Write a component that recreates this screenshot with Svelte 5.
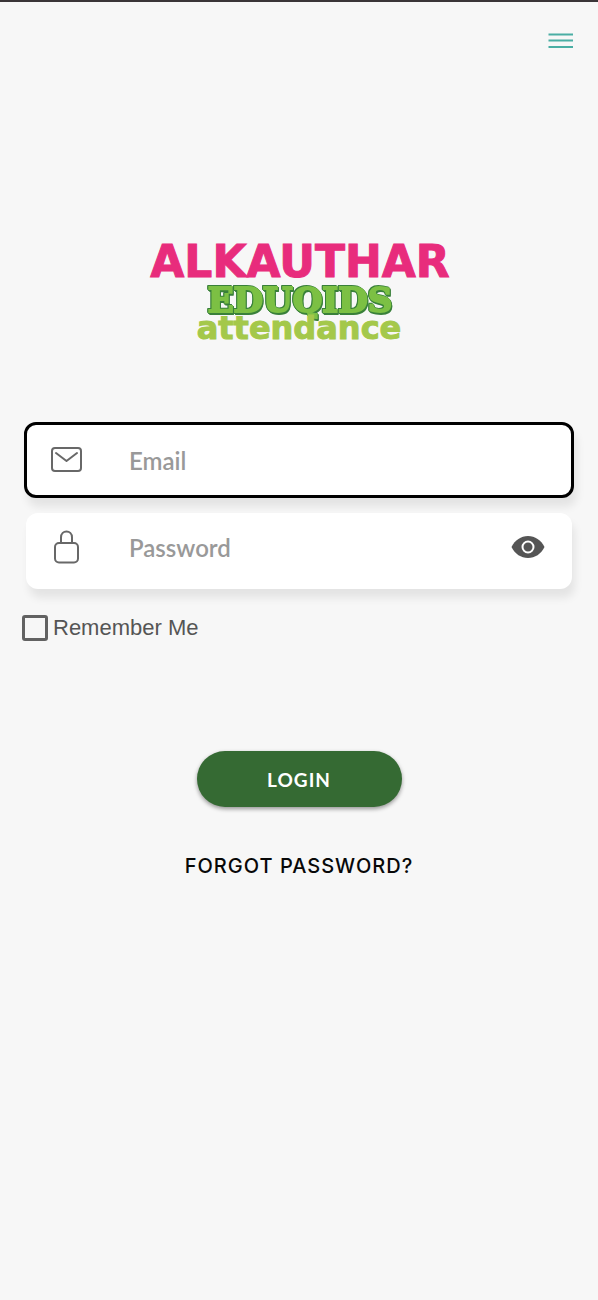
<script lang="ts">
    let email = $state('');
    let password = $state('');
    let remember = $state(false);
    let showPassword = $state(false);

    function togglePassword() {
        showPassword = !showPassword;
    }

    function login(event: SubmitEvent) {
        event.preventDefault();
    }
</script>

<style>
    :global(body) {
        background-color: #f7f7f7;
    }

    .page {
        box-sizing: border-box;
        min-height: 100vh;
        border-top: 2px solid #3a3538;
        font-family: Lato, "Liberation Sans", sans-serif;
    }

    button {
        padding: 0;
        border: none;
        background: none;
        cursor: pointer;
    }

    svg {
        display: block;
    }

    .topBar {
        display: flex;
        justify-content: flex-end;
        padding: 26px 24px 0;
    }

    .logo {
        display: flex;
        justify-content: center;
        padding-top: 174px;
    }

    .brand {
        font-family: "DejaVu Sans", sans-serif;
        font-size: 44px;
        font-weight: bold;
        fill: #e82c7c;
        stroke: #e82c7c;
        stroke-width: 1px;
    }

    .kids {
        font-family: "DejaVu Serif", serif;
        font-size: 34px;
        font-weight: bold;
        fill: #7cc044;
        stroke: #7cc044;
        stroke-width: 2px;
        filter: drop-shadow(1px 1px 0 #39803a) drop-shadow(-1px -1px 0 #39803a) drop-shadow(0 1px 0 #39803a);
    }

    .tagline {
        font-family: "DejaVu Sans", sans-serif;
        font-size: 32px;
        font-weight: bold;
        fill: #a4c84a;
        stroke: #a4c84a;
        stroke-width: 1px;
    }

    form {
        display: flex;
        flex-direction: column;
        padding: 72px 24px 0;
    }

    .field {
        box-sizing: border-box;
        display: flex;
        align-items: center;
        height: 76px;
        margin: 0 2px;
        padding: 0 26px 8px 24px;
        border-radius: 12px;
        background-color: white;
        box-shadow: 3px 9px 9px rgba(0, 0, 0, 0.08);
    }

    .field.active {
        margin: 0 0 15px;
        padding: 0 23px;
        border: 3px solid black;
    }

    .field label {
        width: 79px;
    }

    .field input {
        flex: 1;
        min-width: 0;
        padding: 0;
        border: none;
        outline: none;
        background: none;
        color: #505050;
        font-family: inherit;
        font-size: 24px;
        font-weight: 600;
    }

    .field input::placeholder {
        color: #999;
        opacity: 1;
    }

    .remember {
        display: flex;
        align-items: center;
        gap: 5px;
        margin-top: 26px;
        margin-left: -2px;
        color: #555;
        font-family: "Liberation Sans", sans-serif;
        font-size: 22px;
        line-height: 26px;
    }

    .remember input {
        appearance: none;
        box-sizing: border-box;
        width: 26px;
        height: 26px;
        margin: 0;
        border: 3px solid #626262;
        border-radius: 3px;
    }

    .remember input:checked {
        background-color: #356a33;
    }

    .login {
        align-self: center;
        width: 205px;
        height: 56px;
        margin-top: 110px;
        border-radius: 28px;
        background-color: #356a33;
        box-shadow: 0 2px 4px rgba(0, 0, 0, 0.4);
        color: white;
        font-family: inherit;
        font-size: 19px;
        font-weight: 700;
        letter-spacing: 1px;
    }

    .forgot {
        align-self: center;
        margin-top: 46px;
        color: #080808;
        font-family: Inter, "Liberation Sans", sans-serif;
        font-size: 20px;
        font-weight: 500;
        line-height: 26px;
        letter-spacing: 1px;
        text-decoration: none;
    }
</style>

<div class="page">
    <header class="topBar">
        <button type="button" aria-label="Menu">
            <svg width="26" height="26" viewBox="0 0 26 26" stroke="#4aaea4" stroke-width="2">
                <path d="M0.5 6.5H25M0.5 12.5H25M0.5 19H25" />
            </svg>
        </button>
    </header>

    <div class="logo">
        <svg width="320" height="122" viewBox="0 0 320 122" text-anchor="middle" role="img" aria-label="Alkauthar Eduqids attendance">
            <text class="brand" x="161" y="49">ALKAUTHAR</text>
            <text class="kids" x="161" y="84">EDUQIDS</text>
            <text class="tagline" x="160" y="111">attendance</text>
        </svg>
    </div>

    <form onsubmit={login}>
        <div class="field active">
            <label for="email" aria-label="Email">
                <svg width="32" height="36" viewBox="0 0 32 36" fill="none" stroke="#686868" stroke-width="2" stroke-linecap="round" stroke-linejoin="round">
                    <rect x="2" y="6" width="29" height="23" rx="3" />
                    <path d="M6 11l10.500 8L27 11" />
                </svg>
            </label>
            <input id="email" type="email" placeholder="Email" bind:value={email}>
        </div>
        <div class="field">
            <label for="password" aria-label="Password">
                <svg width="32" height="36" viewBox="0 0 32 36" fill="none" stroke="#686868" stroke-width="2" stroke-linecap="round" stroke-linejoin="round">
                    <rect x="5" y="14" width="23" height="19.500" rx="4" />
                    <path d="M11 14V8.500C11 0.500 22 0.500 22 8.500V14" />
                </svg>
            </label>
            <input id="password" type={showPassword ? 'text' : 'password'} placeholder="Password" bind:value={password}>
            <button type="button" aria-label="Show password" onclick={togglePassword}>
                <svg width="36" height="24" viewBox="0 0 36 24">
                    <path d="M1.500 12C5 5 11 1 18 1s13 4 16.500 11C31 19 25 23 18 23S5 19 1.500 12z" fill="#555" />
                    <circle cx="18" cy="12" r="5.500" fill="#555" stroke="white" stroke-width="2" />
                </svg>
            </button>
        </div>

        <div class="remember">
            <input id="remember" type="checkbox" bind:checked={remember}>
            <label for="remember">Remember Me</label>
        </div>

        <button class="login" type="submit">LOGIN</button>
        <a class="forgot" href="#forgot">FORGOT PASSWORD?</a>
    </form>
</div>
